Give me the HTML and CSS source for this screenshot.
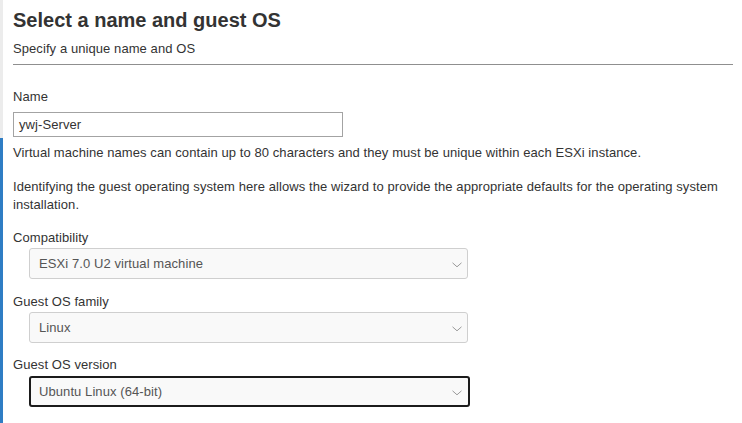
FILE: index.html
```html
<!DOCTYPE html>
<html>
<head>
<meta charset="utf-8">
<link rel="stylesheet" href="styles.css">
</head>
<body>
<div class="page">
  <div class="edge"><div class="edge-top"></div><div class="edge-bottom"></div></div>
  <div class="content">
    <header class="head">
      <h1 class="title">Select a name and guest OS</h1>
      <p class="subtitle">Specify a unique name and OS</p>
    </header>
    <div class="name-group">
      <div class="label">Name</div>
      <div class="input">ywj-Server</div>
      <p class="help">Virtual machine names can contain up to 80 characters and they must be unique within each ESXi instance.</p>
    </div>
    <p class="para">Identifying the guest operating system here allows the wizard to provide the appropriate defaults for the operating system installation.</p>
    <div class="group">
      <div class="label">Compatibility</div>
      <div class="select"><span>ESXi 7.0 U2 virtual machine</span><svg class="chev" width="10" height="6" viewBox="0 0 10 6"><path d="M0.5 0.8 L5 4.8 L9.5 0.8" fill="none" stroke="#9a9a9a" stroke-width="1"/></svg></div>
    </div>
    <div class="group">
      <div class="label">Guest OS family</div>
      <div class="select"><span>Linux</span><svg class="chev" width="10" height="6" viewBox="0 0 10 6"><path d="M0.5 0.8 L5 4.8 L9.5 0.8" fill="none" stroke="#9a9a9a" stroke-width="1"/></svg></div>
    </div>
    <div class="group last">
      <div class="label">Guest OS version</div>
      <div class="select focused"><span>Ubuntu Linux (64-bit)</span><svg class="chev" width="10" height="6" viewBox="0 0 10 6"><path d="M0.5 0.8 L5 4.8 L9.5 0.8" fill="none" stroke="#9a9a9a" stroke-width="1"/></svg></div>
    </div>
  </div>
</div>
</body>
</html>
```

FILE: styles.css
```css
html, body {
  margin: 0;
  padding: 0;
  background: #fff;
  height: 100%;
  overflow: hidden;
}
body {
  font-family: "Liberation Sans", Arial, sans-serif;
  font-size: 13px;
  line-height: 18px;
  letter-spacing: 0.08px;
  color: #333;
}
.page {
  display: flex;
  min-height: 423px;
}
.edge {
  width: 3px;
  display: flex;
  flex-direction: column;
  flex-shrink: 0;
}
.edge-top {
  height: 138px;
  background: #ececec;
}
.edge-bottom {
  flex: 1;
  background: #2f7dc4;
}
.content {
  flex: 1;
  padding: 8px 9px 0 10px;
}
.head {
  border-bottom: 1px solid #8f8f8f;
  padding-bottom: 6px;
}
.title {
  margin: 0;
  font-size: 20px;
  line-height: 24px;
  font-weight: bold;
  letter-spacing: 0;
  color: #333;
}
.subtitle {
  margin: 8px 0 0;
  color: #333;
}
.name-group {
  margin-top: 23px;
}
.label {
  color: #333;
}
.input {
  margin-top: 6px;
  height: 23px;
  border: 1px solid #a3a3a3;
  padding: 0 5px;
  box-sizing: content-box;
  width: 318px;
  line-height: 23px;
  color: #333;
}
.help {
  margin: 7px 0 0;
}
.para {
  margin: 16px 0 0;
  padding-right: 4px;
}
.group {
  margin-top: 15px;
}
.group + .group {
  margin-top: 14px;
}
.group.last {
  margin-top: 13px;
}
.select {
  margin: 1px 0 0 16px;
  width: 439px;
  height: 31px;
  box-sizing: border-box;
  border: 1px solid #cfcfcf;
  border-radius: 3px;
  background: #f9f9f9;
  display: flex;
  align-items: center;
  justify-content: space-between;
  padding: 0 5px 0 9px;
  color: #555;
}
.select.focused {
  width: 441px;
  border: 2px solid #1b1b1b;
  padding: 0 6px 0 8px;
  margin-top: 2px;
}
.chev {
  display: block;
  margin-top: 2px;
}
```
